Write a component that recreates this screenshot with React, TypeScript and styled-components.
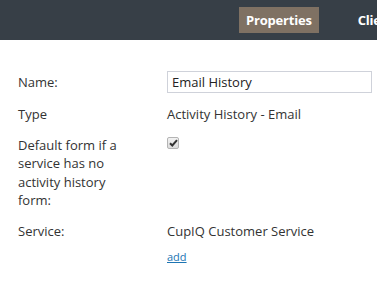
import React from "react";
import styled, { createGlobalStyle } from "styled-components";

const Global = createGlobalStyle`
  html, body { margin: 0; padding: 0; background: #fff; }
  body { font-family: "Open Sans", "Noto Sans", sans-serif; font-size: 13px; color: #333; }
`;

const Header = styled.div`
  height: 40px;
  background: #373f47;
  display: flex;
  align-items: center;
  padding-left: 226px;
  overflow: hidden;
  white-space: nowrap;
`;

const Sep = styled.div`
  width: 1px;
  align-self: stretch;
  margin: 3px 0 4px;
  background: #22272c;
  box-shadow: 1px 0 0 #3f474f;
`;

const NavItem = styled.div<{ $active?: boolean }>`
  height: 26px;
  display: flex;
  align-items: center;
  padding: 0 7px;
  margin: ${(p) => (p.$active ? "0 13px" : "0 0 0 19px")};
  background: ${(p) => (p.$active ? "#7f7163" : "transparent")};
  color: #fff;
  font-weight: 700;
  font-size: 13px;
  letter-spacing: -0.2px;
`;

const Form = styled.div`
  display: grid;
  grid-template-columns: 149px 1fr;
  row-gap: 12px;
  padding: 31px 5px 0 18px;
  align-items: start;
`;

const Label = styled.div<{ $center?: boolean }>`
  line-height: 18.5px;
  width: 100px;
  align-self: ${(p) => (p.$center ? "center" : "start")};
`;

const Value = styled.div`
  line-height: 18.5px;
  display: flex;
  flex-direction: column;
  align-items: flex-start;
`;

const Input = styled.input`
  box-sizing: border-box;
  width: 205px;
  height: 22px;
  border: 1px solid #cfd2da;
  padding: 0 4px;
  font-family: inherit;
  font-size: 13px;
  color: #222;
  outline: none;
`;

const Check = styled.span`
  box-sizing: border-box;
  margin-top: 1px;
  width: 12px;
  height: 12px;
  border: 1px solid #b4b4b4;
  border-radius: 2px;
  background: linear-gradient(#f2f2f2, #dcdcdc);
  display: flex;
  align-items: center;
  justify-content: center;
`;

const Link = styled.a`
  margin-top: 9px;
  font-size: 11px;
  color: #1d75b3;
  text-decoration: underline;
  line-height: 16px;
`;

export default function App() {
  return (
    <>
      <Global />
      <Header>
        <Sep />
        <NavItem $active>Properties</NavItem>
        <Sep />
        <NavItem>Client</NavItem>
      </Header>
      <Form>
        <Label $center>Name:</Label>
        <Value>
          <Input defaultValue="Email History" />
        </Value>
        <Label>Type</Label>
        <Value>Activity History - Email</Value>
        <Label>Default form if a service has no activity history form:</Label>
        <Value>
          <Check>
            <svg width="9" height="8" viewBox="0 0 9 8">
              <path d="M1 4.2 L3.3 6.5 L8 1.2" fill="none" stroke="#333" strokeWidth="2" />
            </svg>
          </Check>
        </Value>
        <Label>Service:</Label>
        <Value>
          CupIQ Customer Service
          <Link href="#">add</Link>
        </Value>
      </Form>
    </>
  );
}
